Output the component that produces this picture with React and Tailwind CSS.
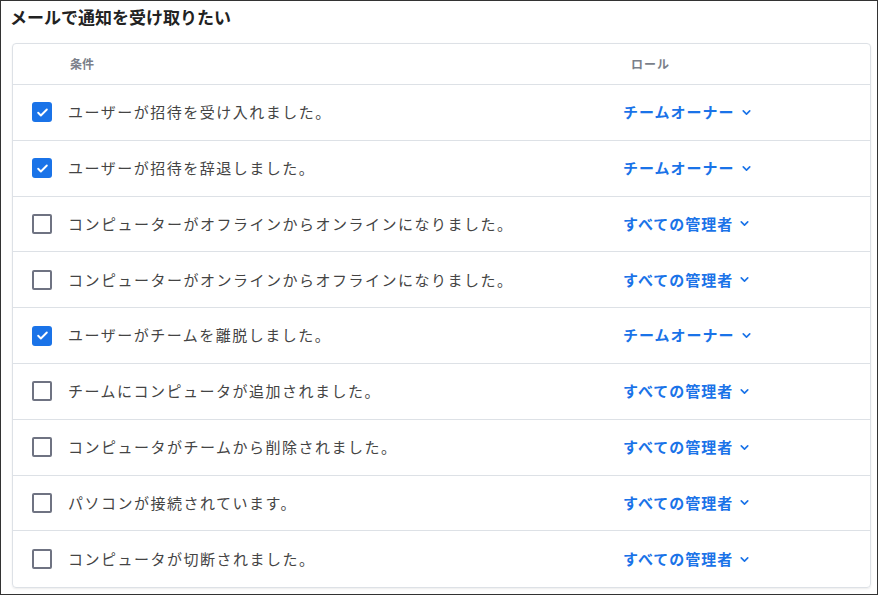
const rows = [
  ["ユーザーが招待を受け入れました。", true, "チームオーナー"],
  ["ユーザーが招待を辞退しました。", true, "チームオーナー"],
  ["コンピューターがオフラインからオンラインになりました。", false, "すべての管理者"],
  ["コンピューターがオンラインからオフラインになりました。", false, "すべての管理者"],
  ["ユーザーがチームを離脱しました。", true, "チームオーナー"],
  ["チームにコンピュータが追加されました。", false, "すべての管理者"],
  ["コンピュータがチームから削除されました。", false, "すべての管理者"],
  ["パソコンが接続されています。", false, "すべての管理者"],
  ["コンピュータが切断されました。", false, "すべての管理者"],
];

export default function App() {
  return (
    <div className="w-[878px] h-[595px] border border-[#333] bg-white overflow-hidden" style={{ fontFamily: '"Noto Sans CJK JP", "Noto Sans", sans-serif' }}>
      <div className="pl-[9px] pt-[3px] h-[42px] text-[17px] font-bold text-[#222]">メールで通知を受け取りたい</div>
      <div className="ml-[11px] mr-[6px] border border-[#dde1e6] rounded-[4px] shadow-[0_1px_2px_rgba(0,0,0,0.08)]">
        <div className="flex items-center h-[41px] border-b border-[#dde1e6] text-[12px] font-bold text-[#7a7f8a]">
          <div className="pl-[57px] w-[610px]">条件</div>
          <div className="pl-[8px] tracking-[1px]">ロール</div>
        </div>
        {rows.map(([t, c, r], i) => (
          <div key={i} className={`flex items-center h-[55.8px] ${i < rows.length - 1 ? "border-b border-[#dde1e6]" : ""}`}>
            <div className="w-[610px] flex items-center pl-[19px]">
              {c ? (
                <div className="w-[20px] h-[20px] rounded-[3px] bg-[#1a73e8] flex items-center justify-center">
                  <svg width="13" height="13" viewBox="0 0 24 24" fill="none" stroke="white" strokeWidth="3.5" strokeLinecap="round" strokeLinejoin="round"><path d="M4 12.5l5 5L20 6.5" /></svg>
                </div>
              ) : (
                <div className="w-[20px] h-[20px] rounded-[2px] border-2 border-[#6f7382]" />
              )}
              <span className="ml-[16px] text-[15px] tracking-[1.5px] text-[#444]">{t}</span>
            </div>
            <div className="flex items-center text-[15px] tracking-[1px] font-bold text-[#1a73e8]">
              {r}
              <svg className="ml-[5px]" width="13" height="13" viewBox="0 0 24 24" fill="none" stroke="#1a73e8" strokeWidth="3" strokeLinecap="round" strokeLinejoin="round"><path d="M6 9l6 6 6-6" /></svg>
            </div>
          </div>
        ))}
      </div>
    </div>
  );
}
